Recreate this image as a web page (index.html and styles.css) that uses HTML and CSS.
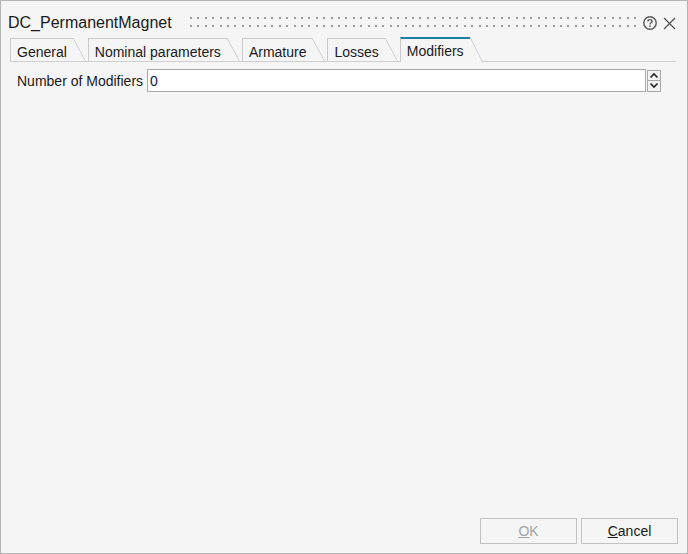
FILE: index.html
```html
<!DOCTYPE html>
<html lang="en">
    <head>
        <meta charset="UTF-8" />
        <meta name="viewport" content="width=device-width, initial-scale=1.0" />
        <link rel="stylesheet" href="styles.css">
        <title>DC_PermanentMagnet</title>
    </head>
    <body>
        <div class="dialog">
            <div class="titlebar">
                <span class="title">DC_PermanentMagnet</span>
                <svg class="grip" height="10">
                    <defs>
                        <pattern id="dots" width="37" height="8" patternUnits="userSpaceOnUse">
                            <rect x="0" y="0" width="2" height="2" fill="#9c9c9c" />
                            <rect x="7" y="0" width="2" height="2" fill="#9c9c9c" />
                            <rect x="15" y="0" width="2" height="2" fill="#9c9c9c" />
                            <rect x="22" y="0" width="2" height="2" fill="#9c9c9c" />
                            <rect x="30" y="0" width="2" height="2" fill="#9c9c9c" />
                        </pattern>
                    </defs>
                    <rect x="0" y="0" width="100%" height="10" fill="url(#dots)" />
                </svg>
                <svg class="help" width="14" height="14" viewBox="0 0 14 14">
                    <circle cx="7" cy="7" r="6.2" fill="none" stroke="#5a5a5a" stroke-width="1.4" />
                    <path d="M4.9 5.5 C4.9 4.2 5.9 3.6 7 3.6 C8.2 3.6 9.1 4.4 9.1 5.4 C9.1 6.7 7 6.8 7 8.4" fill="none" stroke="#5a5a5a" stroke-width="1.4" />
                    <rect x="6.25" y="9.4" width="1.5" height="1.5" fill="#5a5a5a" />
                </svg>
                <svg class="close" width="13" height="13" viewBox="0 0 13 13">
                    <path d="M1 1 L12 12 M12 1 L1 12" stroke="#555" stroke-width="1.3" />
                </svg>
            </div>

            <div class="tabs">
                <div class="tab">General</div>
                <div class="tab">Nominal parameters</div>
                <div class="tab">Armature</div>
                <div class="tab">Losses</div>
                <div class="tab active">Modifiers</div>
            </div>

            <div class="content">
                <div class="row">
                    <label for="modifiers">Number of Modifiers</label>
                    <input type="text" id="modifiers" value="0" />
                    <div class="spin">
                        <button class="spin-btn">
                            <svg width="10" height="7" viewBox="0 0 10 7"><path d="M1.5 5.5 L5 2 L8.5 5.5" fill="none" stroke="#222" stroke-width="1.6" /></svg>
                        </button>
                        <button class="spin-btn">
                            <svg width="10" height="7" viewBox="0 0 10 7"><path d="M1.5 1.5 L5 5 L8.5 1.5" fill="none" stroke="#222" stroke-width="1.6" /></svg>
                        </button>
                    </div>
                </div>
            </div>

            <div class="footer">
                <button class="btn" disabled><u>O</u>K</button>
                <button class="btn"><u>C</u>ancel</button>
            </div>
        </div>
    </body>
</html>
```

FILE: styles.css
```css
* {
    margin: 0;
    padding: 0;
    box-sizing: border-box;
    font-family: "Liberation Sans", Arial, sans-serif;
}

body {
    width: 688px;
    height: 554px;
    overflow: hidden;
}

.dialog {
    width: 688px;
    height: 554px;
    border: 1px solid #b4b4b4;
    background-color: #f5f5f5;
    display: flex;
    flex-direction: column;
}

/* title bar */
.titlebar {
    height: 36px;
    display: flex;
    align-items: flex-start;
    padding: 0 11px 0 7px;
}

.title {
    font-size: 16px;
    line-height: 18px;
    margin-top: 13px;
    color: #1a1a1a;
}

.grip {
    flex: 1;
    margin: 16px 0 0 18px;
}

.help {
    margin: 15px 0 0 7px;
}

.close {
    margin: 16px 0 0 6px;
}

/* tabs */
.tabs {
    display: flex;
    align-items: flex-end;
    height: 25px;
    margin: 0 11px 0 9px;
    border-bottom: 1px solid #d0d0d0;
}

.tab {
    position: relative;
    height: 23px;
    padding: 5px 6px 0;
    margin-right: 15px;
    border-left: 1px solid #c9c9c9;
    border-top: 1px solid #c9c9c9;
    font-size: 14px;
    line-height: 16px;
    color: #1a1a1a;
    white-space: nowrap;
}

.tab::after {
    content: "";
    position: absolute;
    top: -1px;
    right: -13px;
    width: 13px;
    height: 24px;
    background: linear-gradient(to top right, transparent calc(50% - 0.8px), #cdcdcd 50%, transparent calc(50% + 0.8px));
}

.tab.active {
    height: 25px;
    margin-bottom: -1px;
    padding-top: 4px;
    border-top: 2px solid #1f7ea3;
    background-color: #f5f5f5;
}

.tab.active::after {
    top: -2px;
    height: 26px;
    background: linear-gradient(to top right, #f5f5f5 calc(50% - 0.8px), #cdcdcd 50%, transparent calc(50% + 0.8px));
}

/* content */
.content {
    flex: 1;
    padding: 7px 26px 0 16px;
}

.row {
    display: flex;
    align-items: center;
    height: 23px;
}

.row label {
    font-size: 14px;
    line-height: 16px;
    color: #1a1a1a;
    margin-right: 4px;
    white-space: nowrap;
}

.row input {
    flex: 1;
    height: 23px;
    border: 1px solid #a8a8a8;
    background-color: white;
    padding: 0 2px;
    font-size: 14px;
    color: #14143c;
    outline: none;
}

.spin {
    display: flex;
    flex-direction: column;
    margin-left: 1px;
    height: 22px;
}

.spin-btn {
    width: 14px;
    height: 11px;
    border: 1px solid #a8a8a8;
    background-color: #f3f3f3;
    display: flex;
    align-items: center;
    justify-content: center;
}

.spin-btn + .spin-btn {
    border-top: none;
}

/* footer buttons */
.footer {
    display: flex;
    justify-content: flex-end;
    gap: 4px;
    padding: 0 9px 9px;
}

.btn {
    width: 97px;
    height: 26px;
    border: 1px solid #c2c2c2;
    background-color: #f5f5f5;
    font-size: 14px;
    color: #1a1a1a;
}

.btn:disabled {
    color: #a3a3a3;
}
```
